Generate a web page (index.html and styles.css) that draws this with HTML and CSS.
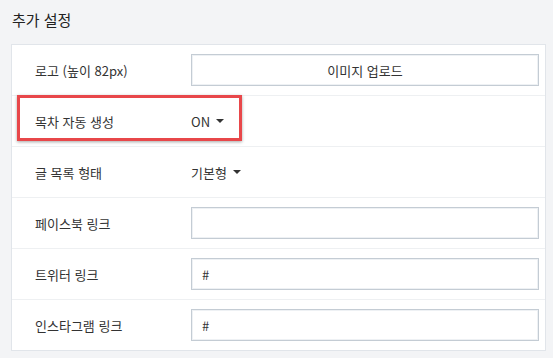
FILE: index.html
```html
<!DOCTYPE html>
<html lang="ko">
<head>
    <meta charset="UTF-8">
    <meta name="viewport" content="width=device-width, initial-scale=1.0">
    <title>추가 설정</title>
    <link rel="stylesheet" href="styles.css">
</head>
<body>
    <h2 class="title">추가 설정</h2>

    <div class="panel">
        <div class="row">
            <div class="label">로고 (높이 82px)</div>
            <div class="field">
                <button class="upload">이미지 업로드</button>
            </div>
        </div>

        <div class="row">
            <div class="highlight"></div>
            <div class="label">목차 자동 생성</div>
            <div class="field">
                <span class="select">ON <span class="caret"></span></span>
            </div>
        </div>

        <div class="row">
            <div class="label">글 목록 형태</div>
            <div class="field">
                <span class="select">기본형 <span class="caret"></span></span>
            </div>
        </div>

        <div class="row">
            <div class="label">페이스북 링크</div>
            <div class="field">
                <input class="text" type="text" value="">
            </div>
        </div>

        <div class="row">
            <div class="label">트위터 링크</div>
            <div class="field">
                <input class="text" type="text" value="#">
            </div>
        </div>

        <div class="row">
            <div class="label">인스타그램 링크</div>
            <div class="field">
                <input class="text" type="text" value="#">
            </div>
        </div>
    </div>
</body>
</html>
```

FILE: styles.css
```css
body {
    background-color: #f3f4f6;
    color: #333;
    font-family: 'Noto Sans CJK KR', 'Noto Sans', sans-serif;
    font-size: 13px;
    margin: 0;
    padding: 0 7px 0 11px;
}

.title {
    font-size: 15px;
    font-weight: normal;
    color: #222;
    line-height: 20px;
    margin: 0;
    padding: 10px 0 14px 1px;
}

.panel {
    background-color: #fff;
    border: 1px solid #e1e5ea;
}

.row {
    display: flex;
    align-items: center;
    height: 50px;
    border-bottom: 1px solid #eef0f2;
    position: relative;
}

.row:last-child {
    border-bottom: none;
}

.label {
    width: 156px;
    padding-left: 23px;
    flex-shrink: 0;
}

.field {
    flex: 1;
    padding-right: 6px;
}

.upload,
.text {
    display: block;
    width: 100%;
    height: 32px;
    box-sizing: border-box;
    background: #fff;
    border: 1px solid #c4ccd4;
    box-shadow: inset 0 0 0 1px #eef1f4;
    font-family: inherit;
    font-size: 13px;
    color: #333;
    margin: 0;
}

.upload {
    text-align: center;
}

.text {
    padding: 0 10px;
    outline: none;
}

.select {
    display: inline-flex;
    align-items: center;
}

.caret {
    display: inline-block;
    width: 0;
    height: 0;
    margin-left: 6px;
    border-left: 4px solid transparent;
    border-right: 4px solid transparent;
    border-top: 4px solid #333;
}

.highlight {
    position: absolute;
    left: 5px;
    top: -1px;
    width: 225px;
    height: 46px;
    box-sizing: border-box;
    border: 3px solid #e8474a;
    box-shadow: 0 1px 3px rgba(0, 0, 0, 0.35);
    pointer-events: none;
}
```
